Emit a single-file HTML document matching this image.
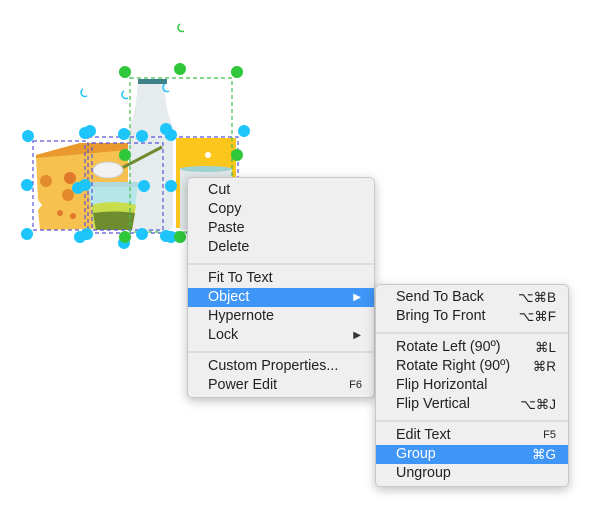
<!DOCTYPE html>
<html><head><meta charset="utf-8"><style>
body{margin:0;width:614px;height:525px;background:#fff;position:relative;overflow:hidden;font-family:"Liberation Sans",Helvetica,sans-serif;}
.menu{position:absolute;box-sizing:border-box;background:#efefef;border:1px solid #c8c8c8;border-radius:5px;box-shadow:0 3px 10px rgba(0,0,0,.25);font-size:14.3px;color:#222;}
.it{position:absolute;left:0;right:0;height:19px;line-height:19px;}
.it .t{position:absolute;}
.it .k{position:absolute;right:12px;font-size:13.5px;}
.hl{background:#3f96f7;color:#fff;}
.sep{position:absolute;left:0;right:0;height:2px;background:#dcdcdc;}
</style></head><body>
<svg width="614" height="525" style="position:absolute;left:0;top:0">
<polygon points="36,155 80,143 128,143 128,228 40,230 38,210 42,205 38,200" fill="#f6c14e"/>
<polygon points="36,155 80,143 128,143 128,150 36,158" fill="#e9992d"/>
<circle cx="46" cy="181" r="6" fill="#e28a2c"/><circle cx="70" cy="178" r="6" fill="#e07a2a"/><circle cx="68" cy="195" r="6" fill="#e28a2c"/>
<circle cx="60" cy="213" r="3" fill="#e07a2a"/><circle cx="73" cy="216" r="3" fill="#e07a2a"/>
<rect x="176" y="138" width="60" height="90" fill="#fcc61c"/>
<circle cx="208" cy="155" r="3" fill="#fff"/>
<rect x="180" y="168" width="52" height="62" fill="#dfe7e9"/>
<ellipse cx="206" cy="169" rx="26" ry="3" fill="#9fd2d0"/>
<path d="M140,80 h25 v8 q0,20 8,40 v95 q0,8 -8,8 h-28 q-8,0 -8,-8 v-95 q8,-20 8,-40z" fill="#e6ebee"/>
<rect x="138" y="79" width="29" height="5" fill="#3e8088"/>
<line x1="118" y1="170" x2="162" y2="147" stroke="#6f8a2f" stroke-width="3"/>
<ellipse cx="108" cy="170" rx="15" ry="8" fill="#f1f1f1" stroke="#ccc"/>
<path d="M88,185 h50 l-6,45 h-38z" fill="#b7e6ea"/>
<path d="M91,205 q22,-6 45,0 l-4,25 h-38z" fill="#c9dc4b"/>
<path d="M93,213 q20,-3 42,0 l-3,17 h-36z" fill="#6d8d2e"/>
<rect x="88" y="182" width="50" height="5" rx="2" fill="#b0d8de"/>
<g fill="none" stroke="#5a56d6" stroke-width="1.2" stroke-dasharray="4,3">
<rect x="33" y="141" width="52" height="89"/>
<rect x="92" y="143" width="71" height="87"/>
<rect x="88" y="137" width="150" height="96"/>
</g>
<rect x="130" y="78" width="102" height="154" fill="none" stroke="#3cc24a" stroke-width="1.2" stroke-dasharray="4,3"/>
<g fill="#1ec5fb">
<circle cx="28" cy="136" r="6"/><circle cx="85" cy="133" r="6"/><circle cx="90" cy="131" r="6"/><circle cx="124" cy="134" r="6"/><circle cx="142" cy="136" r="6"/><circle cx="166" cy="129" r="6"/><circle cx="171" cy="135" r="6"/><circle cx="244" cy="131" r="6"/>
<circle cx="27" cy="185" r="6"/><circle cx="78" cy="188" r="6"/><circle cx="85" cy="185" r="6"/><circle cx="144" cy="186" r="6"/><circle cx="171" cy="186" r="6"/>
<circle cx="27" cy="234" r="6"/><circle cx="80" cy="237" r="6"/><circle cx="87" cy="234" r="6"/><circle cx="124" cy="243" r="6"/><circle cx="142" cy="234" r="6"/><circle cx="166" cy="236" r="6"/><circle cx="171" cy="237" r="6"/>
</g>
<g fill="#2ec83a">
<circle cx="125" cy="72" r="6"/><circle cx="180" cy="69" r="6"/><circle cx="237" cy="72" r="6"/><circle cx="125" cy="155" r="6"/><circle cx="237" cy="155" r="6"/><circle cx="125" cy="237" r="6"/><circle cx="180" cy="237" r="6"/>
</g>
<g fill="none" stroke-width="1.5">
<path d="M87,96 a4,4 0 1 1 -4,-7" stroke="#1ec5fb"/><path d="M128,98 a4,4 0 1 1 -4,-7" stroke="#1ec5fb"/><path d="M169,91 a4,4 0 1 1 -4,-7" stroke="#1ec5fb"/><path d="M184,31 a4,4 0 1 1 -4,-7" stroke="#2ec83a"/>
</g>
</svg>
<div class="menu" style="left:187px;top:177px;width:188px;height:221px;">
<div class="it" style="top:3px"><span class="t" style="left:20px">Cut</span></div>
<div class="it" style="top:22px"><span class="t" style="left:20px">Copy</span></div>
<div class="it" style="top:41px"><span class="t" style="left:20px">Paste</span></div>
<div class="it" style="top:60px"><span class="t" style="left:20px">Delete</span></div>
<div class="sep" style="top:85px"></div>
<div class="it" style="top:91px"><span class="t" style="left:20px">Fit To Text</span></div>
<div class="it hl" style="top:110px"><span class="t" style="left:20px">Object</span><span class="k" style="right:13px;font-size:10px">▶</span></div>
<div class="it" style="top:129px"><span class="t" style="left:20px">Hypernote</span></div>
<div class="it" style="top:148px"><span class="t" style="left:20px">Lock</span><span class="k" style="right:13px;font-size:10px;color:#333">▶</span></div>
<div class="sep" style="top:173px"></div>
<div class="it" style="top:179px"><span class="t" style="left:20px">Custom Properties...</span></div>
<div class="it" style="top:198px"><span class="t" style="left:20px">Power Edit</span><span class="k" style="font-size:11px">F6</span></div>
</div>
<div class="menu" style="left:375px;top:284px;width:194px;height:203px;">
<div class="it" style="top:3px"><span class="t" style="left:20px">Send To Back</span><span class="k">⌥⌘B</span></div>
<div class="it" style="top:22px"><span class="t" style="left:20px">Bring To Front</span><span class="k">⌥⌘F</span></div>
<div class="sep" style="top:47px"></div>
<div class="it" style="top:53px"><span class="t" style="left:20px">Rotate Left (90º)</span><span class="k">⌘L</span></div>
<div class="it" style="top:72px"><span class="t" style="left:20px">Rotate Right (90º)</span><span class="k">⌘R</span></div>
<div class="it" style="top:91px"><span class="t" style="left:20px">Flip Horizontal</span></div>
<div class="it" style="top:110px"><span class="t" style="left:20px">Flip Vertical</span><span class="k">⌥⌘J</span></div>
<div class="sep" style="top:135px"></div>
<div class="it" style="top:141px"><span class="t" style="left:20px">Edit Text</span><span class="k" style="font-size:11px">F5</span></div>
<div class="it hl" style="top:160px"><span class="t" style="left:20px">Group</span><span class="k">⌘G</span></div>
<div class="it" style="top:179px"><span class="t" style="left:20px">Ungroup</span></div>
</div>
</body></html>
